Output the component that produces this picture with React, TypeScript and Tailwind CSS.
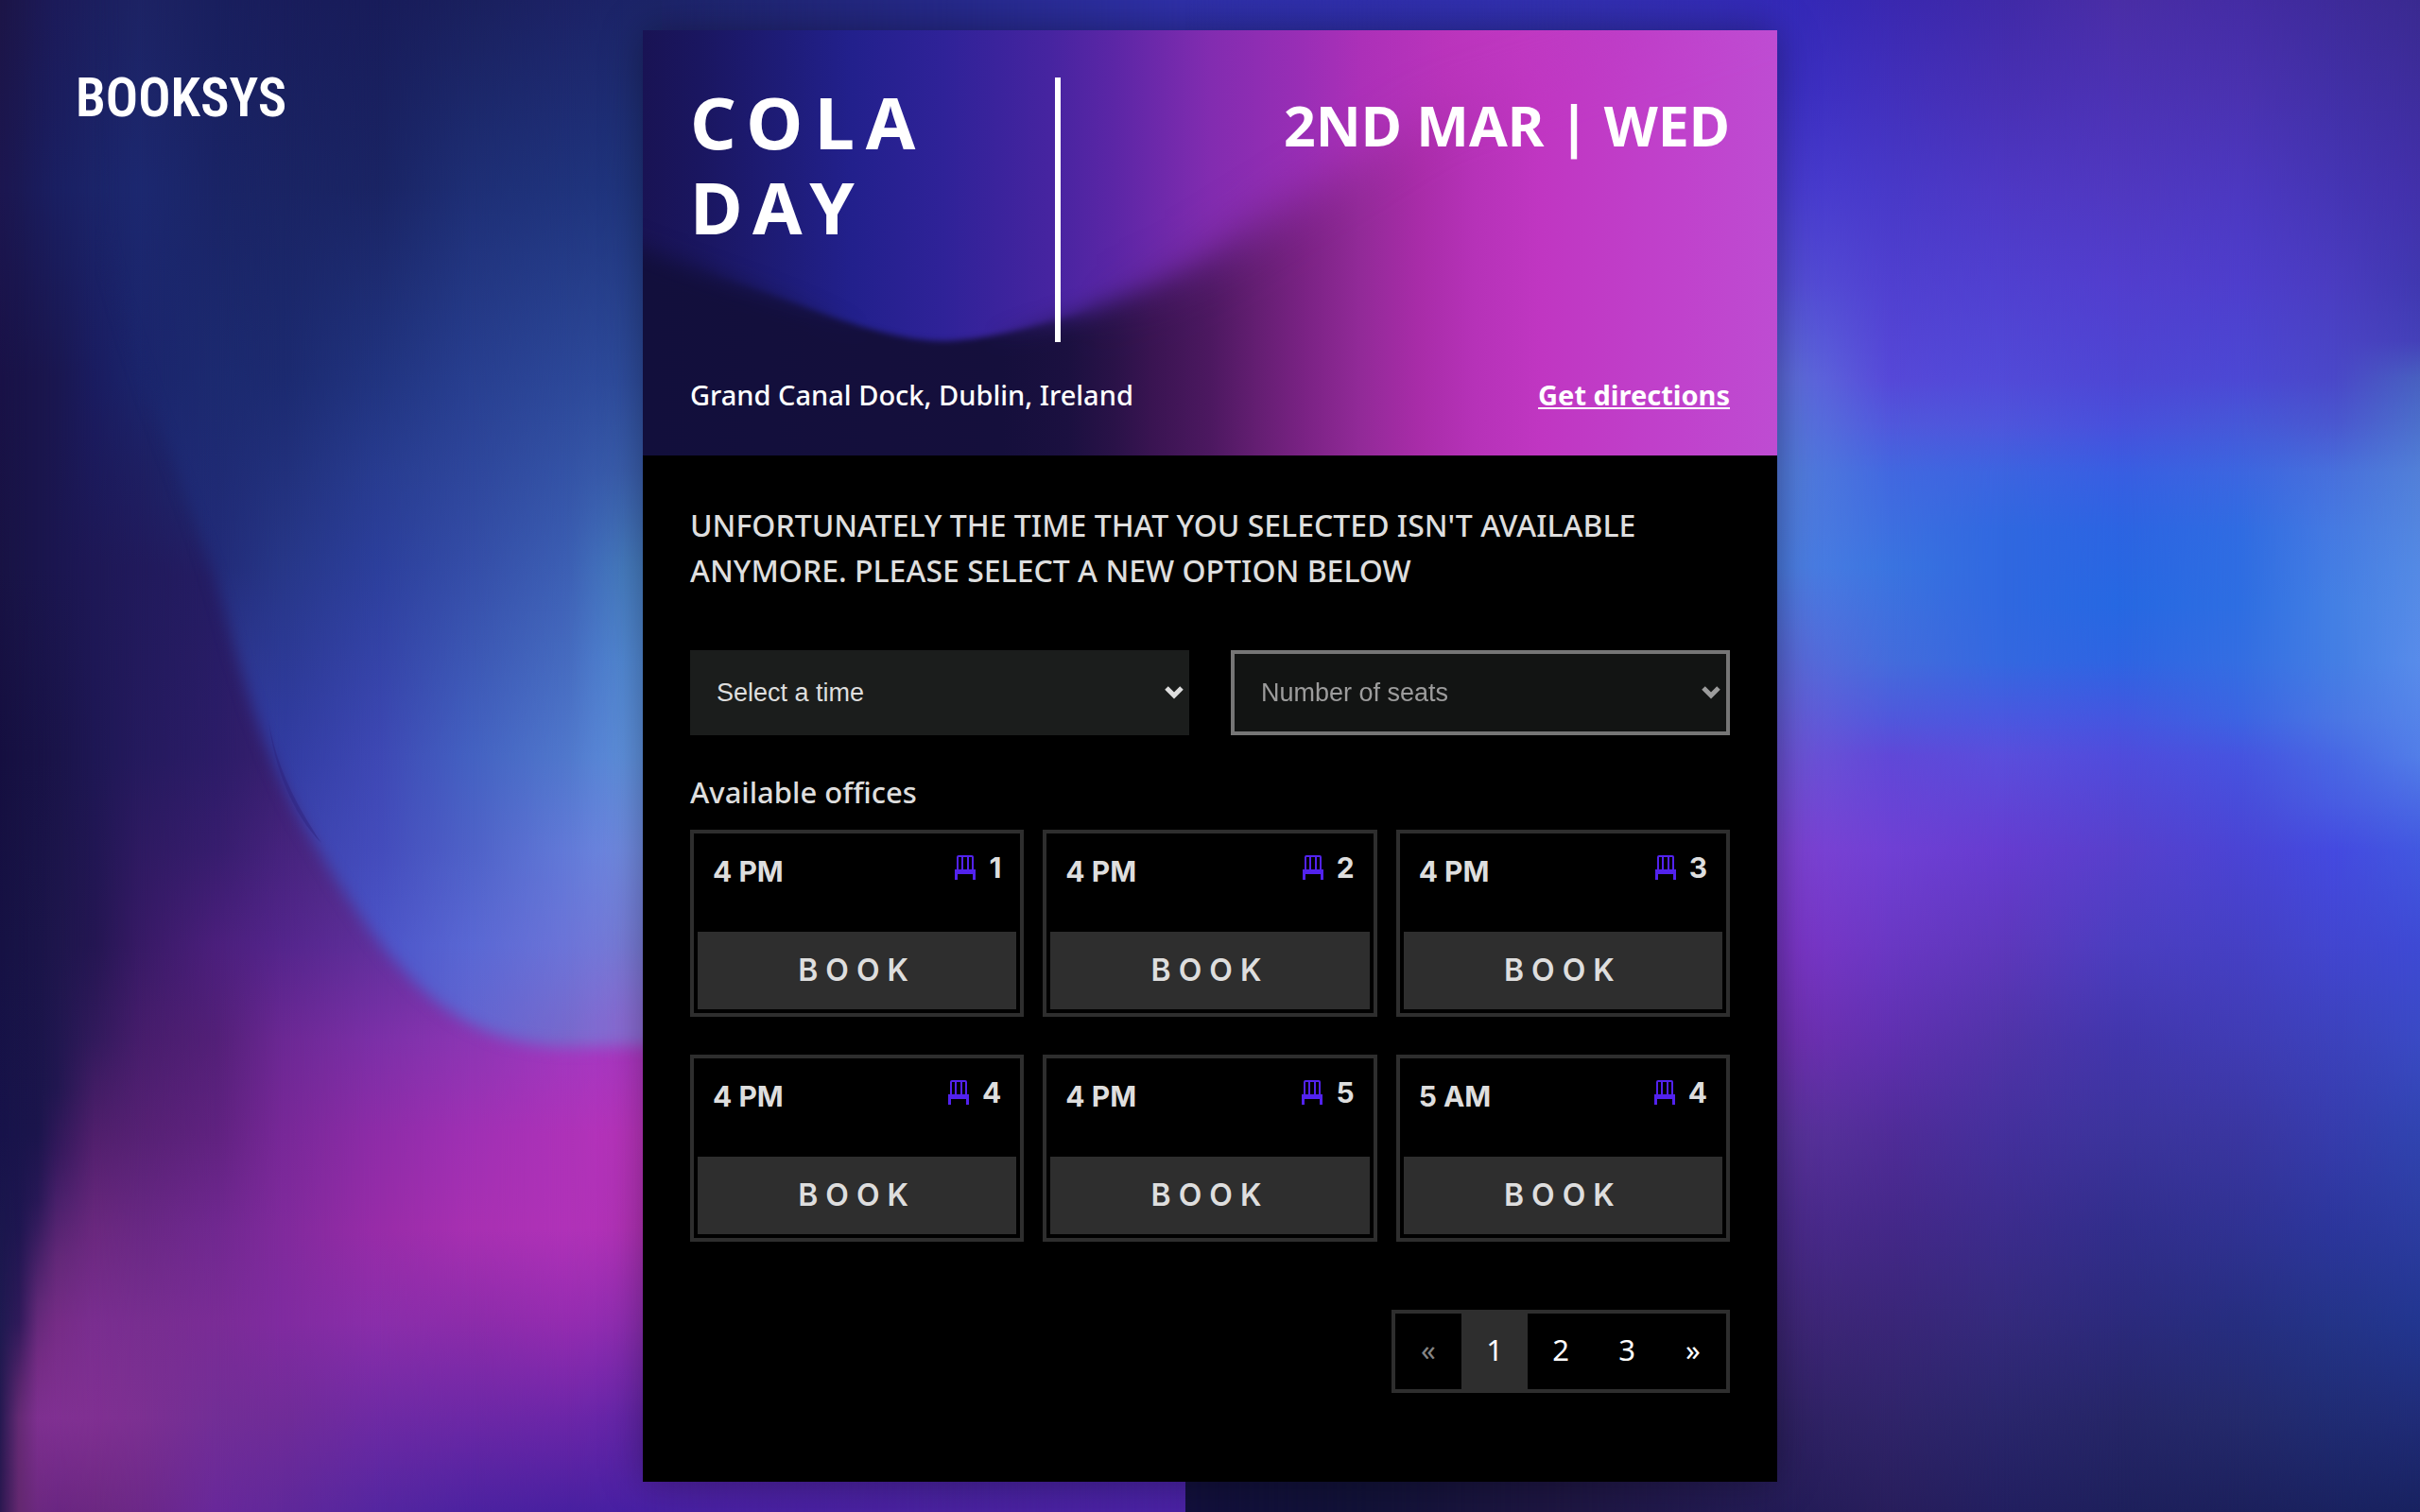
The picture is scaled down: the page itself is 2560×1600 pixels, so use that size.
import { useId } from 'react';

type Stop = [number, string];
type Column = { x: number; stops: Stop[] };

/* Columns of vertical gradients; each one fades into the next from left to right. */
const leftBase: Column[] = [
  { x: 0, stops: [[0, '#1c1547'], [200, '#1c1650'], [400, '#191247'], [600, '#181344'], [800, '#150f40'], [1000, '#161244'], [1200, '#17134a'], [1400, '#1e1a50'], [1600, '#2c1850']] },
  { x: 20, stops: [[0, '#1c174d'], [200, '#1b1954'], [400, '#191349'], [600, '#191448'], [800, '#171143'], [1000, '#181346'], [1200, '#19144b'], [1300, '#1e1650'], [1400, '#301a5a'], [1460, '#52246a'], [1500, '#642a74'], [1600, '#642870']] },
  { x: 40, stops: [[0, '#1c1954'], [200, '#1a1c5c'], [400, '#1a154c'], [600, '#1a154c'], [800, '#181246'], [1000, '#1a1448'], [1200, '#1b154c'], [1270, '#281856'], [1320, '#401f64'], [1380, '#5e2876'], [1440, '#742c84'], [1500, '#7e3090'], [1600, '#6c2880']] },
  { x: 60, stops: [[0, '#1c1b5a'], [200, '#1a1f62'], [400, '#1a1750'], [600, '#1b1650'], [800, '#1a1449'], [1000, '#1e164c'], [1150, '#211750'], [1220, '#34195c'], [1270, '#48206a'], [1330, '#622878'], [1400, '#762c86'], [1500, '#803092'], [1600, '#6a2682']] },
  { x: 100, stops: [[0, '#1c1f5f'], [200, '#1b2469'], [400, '#1a1c60'], [600, '#1e1856'], [800, '#1e1754'], [1000, '#241652'], [1100, '#321a5c'], [1200, '#501f6c'], [1300, '#6a287e'], [1400, '#7a2e90'], [1500, '#803092'], [1600, '#6c2882']] },
  { x: 150, stops: [[0, '#1d2364'], [200, '#1c2870'], [400, '#1b256c'], [500, '#1e1f62'], [600, '#211a5c'], [800, '#251a5e'], [1000, '#381a66'], [1100, '#471d6c'], [1200, '#562174'], [1300, '#692884'], [1400, '#782e90'], [1500, '#7c3092'], [1600, '#6c2888']] },
  { x: 229, stops: [[0, '#191f5e'], [200, '#1a2466'], [400, '#1c2a70'], [520, '#1e286e'], [610, '#251d64'], [800, '#2c1c68'], [900, '#371d6e'], [1000, '#4b1f7c'], [1100, '#532078'], [1200, '#602280'], [1300, '#702890'], [1400, '#7a2c96'], [1500, '#722e96'], [1600, '#68289a']] },
  { x: 300, stops: [[0, '#191d5c'], [200, '#1a2464'], [400, '#1c2a70'], [600, '#25246c'], [700, '#35206e'], [800, '#38206f'], [900, '#46237e'], [1000, '#54258c'], [1100, '#6c2894'], [1200, '#782898'], [1300, '#802a9c'], [1400, '#802ba0'], [1500, '#702c98'], [1600, '#60289a']] },
  { x: 400, stops: [[0, '#181c5a'], [900, '#50308c'], [1000, '#60309c'], [1100, '#7c30a8'], [1200, '#8e2ca8'], [1300, '#982ca8'], [1400, '#8a2eaa'], [1500, '#6e2aa4'], [1600, '#5426a0']] },
  { x: 500, stops: [[0, '#1a205e'], [1000, '#7033a8'], [1100, '#8c36b4'], [1200, '#a030b4'], [1300, '#a830b2'], [1400, '#8c2caa'], [1500, '#6c28a6'], [1600, '#4c22a0']] },
  { x: 600, stops: [[0, '#1c2266'], [1000, '#8a38bc'], [1100, '#a038c0'], [1200, '#ae32b8'], [1300, '#b032b8'], [1400, '#942cb0'], [1500, '#6c26a8'], [1600, '#4820a0']] },
  { x: 680, stops: [[0, '#1c2468'], [1000, '#9038c0'], [1100, '#ac38c4'], [1200, '#ba34bc'], [1300, '#b232b6'], [1400, '#8e2eb2'], [1500, '#6426aa'], [1600, '#4820a4']] },
  { x: 1000, stops: [[0, '#26298a'], [800, '#26298a'], [1600, '#4a22a0']] },
  { x: 1250, stops: [[0, '#2f30a8'], [800, '#2d2ea0'], [1600, '#4a22a4']] },
];

const blob: Column[] = [
  { x: 100, stops: [[0, '#1c1f5f'], [200, '#1b2469'], [400, '#1b1e60'], [600, '#1c2468']] },
  { x: 150, stops: [[0, '#1d2364'], [200, '#1c2870'], [400, '#1b256c'], [600, '#202c78']] },
  { x: 229, stops: [[0, '#191f5e'], [200, '#1a2466'], [400, '#1c2a70'], [600, '#222b78'], [700, '#2c358c'], [800, '#3038a0']] },
  { x: 300, stops: [[0, '#191d5c'], [200, '#1a2464'], [400, '#1c2a70'], [600, '#273788'], [800, '#323ca2'], [900, '#3c42ac']] },
  { x: 400, stops: [[0, '#181c5a'], [200, '#1a2464'], [400, '#213480'], [500, '#283c90'], [600, '#2c3f9c'], [800, '#3e48b4'], [900, '#444cbc'], [1000, '#4c54c8']] },
  { x: 500, stops: [[0, '#1a205e'], [200, '#1e2f76'], [400, '#283f90'], [600, '#354ea8'], [800, '#4462c2'], [900, '#4f62c8'], [1000, '#5a68d4'], [1100, '#6464d0']] },
  { x: 600, stops: [[0, '#1c2266'], [200, '#1f337c'], [400, '#2c4798'], [600, '#3c5fb4'], [800, '#5078cc'], [900, '#627ad8'], [1000, '#6c74d8'], [1100, '#7868cc']] },
  { x: 660, stops: [[0, '#1c2468'], [200, '#20357e'], [400, '#2e4c9c'], [500, '#3a5eac'], [600, '#467cc0'], [700, '#5289d4'], [800, '#5e90dc'], [900, '#708ae0'], [1000, '#787cd8'], [1080, '#8a6cd4']] },
];

const right: Column[] = [
  { x: 1254, stops: [[0, '#2f30a8'], [1500, '#12103c'], [1600, '#12103c']] },
  { x: 1440, stops: [[0, '#302fac'], [1500, '#121238'], [1600, '#121238']] },
  { x: 1650, stops: [[0, '#3230b0'], [1500, '#1e1642'], [1600, '#1e1642']] },
  { x: 1900, stops: [[0, '#3429b8'], [100, '#3c30c4'], [200, '#483cd0'], [300, '#544ed6'], [400, '#5e6cdc'], [500, '#527cdc'], [600, '#4c7ee2'], [700, '#5a6ada'], [800, '#6c54d6'], [900, '#7c42d2'], [1000, '#7a36c6'], [1100, '#6e30b0'], [1200, '#58329a'], [1300, '#4a2a8a'], [1400, '#3e2676'], [1500, '#302264'], [1600, '#241c58']] },
  { x: 2000, stops: [[0, '#3a28b0'], [100, '#4230bc'], [200, '#4839c8'], [300, '#5040d0'], [400, '#5648d8'], [450, '#5058dc'], [500, '#4268e0'], [600, '#3a74e0'], [700, '#446cdc'], [760, '#5058dc'], [800, '#6048d8'], [900, '#7040d4'], [1000, '#6a38c4'], [1100, '#6030b0'], [1200, '#502c98'], [1300, '#442888'], [1400, '#3a2678'], [1500, '#30246a'], [1600, '#281e5c']] },
  { x: 2120, stops: [[0, '#402aa8'], [100, '#4830b4'], [200, '#4e38c4'], [300, '#5040d0'], [400, '#524ad8'], [450, '#4e56dc'], [500, '#3c64e0'], [560, '#3068e0'], [640, '#3068e0'], [700, '#3468e0'], [760, '#4a58e0'], [800, '#5a4edc'], [900, '#663cd0'], [1000, '#5e38bc'], [1100, '#5034a8'], [1200, '#44309c'], [1300, '#3c2c8c'], [1400, '#342a7c'], [1500, '#2a266c'], [1600, '#221f60']] },
  { x: 2240, stops: [[0, '#4a2ea6'], [100, '#4c32b4'], [200, '#5038c0'], [300, '#523ece'], [400, '#4e46d4'], [450, '#4850dc'], [500, '#385ee2'], [560, '#2c64e2'], [640, '#2668e2'], [700, '#2e64e2'], [760, '#4456e0'], [800, '#504cdc'], [900, '#5840cc'], [1000, '#4c3ec0'], [1100, '#4236ac'], [1200, '#3c349c'], [1300, '#322e8c'], [1400, '#2c2a7c'], [1500, '#262668'], [1600, '#1e205c']] },
  { x: 2370, stops: [[0, '#442ca4'], [100, '#4a32b0'], [200, '#4c38c0'], [300, '#4e3ecc'], [400, '#4c48d4'], [450, '#4658d8'], [500, '#3c66e0'], [560, '#306ce2'], [640, '#2e6ee2'], [700, '#346ee2'], [760, '#3c64e2'], [800, '#4654e0'], [900, '#4a44d4'], [1000, '#4540c4'], [1100, '#403cb4'], [1200, '#3a36a0'], [1300, '#303292'], [1400, '#262e80'], [1500, '#242a6c'], [1600, '#1c205c']] },
  { x: 2470, stops: [[0, '#3e2b9a'], [200, '#4535b4'], [300, '#4a3cc0'], [400, '#4a48c8'], [450, '#4a58d0'], [500, '#4870dc'], [560, '#467ae2'], [640, '#4480e4'], [700, '#447ee4'], [760, '#4a76e4'], [800, '#4868e4'], [850, '#485ce2'], [900, '#444ae0'], [1000, '#4246d0'], [1100, '#3c42bc'], [1200, '#363cac'], [1300, '#2c369c'], [1400, '#243488'], [1500, '#202c74'], [1600, '#1a2260']] },
  { x: 2560, stops: [[0, '#3a2a90'], [200, '#4230aa'], [300, '#4038b0'], [360, '#4440b8'], [400, '#4860c0'], [450, '#4c70cc'], [500, '#5280d8'], [600, '#548ae4'], [700, '#588cea'], [800, '#527ee8'], [850, '#4a6ae4'], [900, '#4258e0'], [1000, '#3e4ad4'], [1100, '#3a4ac4'], [1200, '#3044b0'], [1300, '#2c3ca0'], [1400, '#223690'], [1500, '#202c78'], [1600, '#182260']] },
];

function Mesh({ columns, end }: { columns: Column[]; end: number }) {
  const id = useId();
  return (
    <>
      {columns.map((column, i) => {
        const from = i === 0 ? column.x : columns[i - 1].x;
        return (
          <g key={column.x}>
            <linearGradient id={`${id}c${i}`} gradientUnits="userSpaceOnUse" x1="0" y1="0" x2="0" y2="1600">
              {column.stops.map(([y, color]) => (
                <stop key={y} offset={y / 1600} stopColor={color} />
              ))}
            </linearGradient>
            {i > 0 && (
              <>
                <linearGradient id={`${id}f${i}`} gradientUnits="userSpaceOnUse" x1={from} y1="0" x2={column.x} y2="0">
                  <stop offset="0" stopColor="#fff" stopOpacity="0" />
                  <stop offset="1" stopColor="#fff" />
                </linearGradient>
                <mask id={`${id}m${i}`} maskUnits="userSpaceOnUse" x="0" y="0" width="2560" height="1600">
                  <rect x={from} width={end - from} height="1600" fill={`url(#${id}f${i})`} />
                </mask>
              </>
            )}
            <rect
              x={from}
              width={end - from}
              height="1600"
              fill={`url(#${id}c${i})`}
              mask={i > 0 ? `url(#${id}m${i})` : undefined}
            />
          </g>
        );
      })}
    </>
  );
}

function Backdrop() {
  return (
    <svg
      aria-hidden="true"
      viewBox="0 0 2560 1600"
      preserveAspectRatio="none"
      className="absolute inset-0 -z-10 h-full w-full"
    >
      <defs>
        <filter id="blobSoft" x="-10%" y="-10%" width="120%" height="120%">
          <feGaussianBlur stdDeviation="8" />
        </filter>
        <mask id="blobMask" maskUnits="userSpaceOnUse" x="0" y="0" width="1250" height="1600">
          <path
            d="M110 -60V250C145 400 205 530 236 640C262 740 290 825 335 896C365 948 402 1005 445 1046C484 1082 534 1108 604 1108C640 1108 680 1106 900 1098V-60Z"
            fill="#fff"
            filter="url(#blobSoft)"
          />
        </mask>
      </defs>
      <Mesh columns={leftBase} end={1254} />
      <g mask="url(#blobMask)">
        <Mesh columns={blob} end={700} />
      </g>
      <path d="M284 762C292 810 312 850 340 892C310 862 290 812 284 762Z" fill="#2a1f78" opacity="0.4" />
      <Mesh columns={right} end={2560} />
    </svg>
  );
}

const upperStops: Stop[] = [[0, '#191354'], [60, '#1a1660'], [150, '#1e1c78'], [220, '#22208c'], [320, '#2f2298'], [430, '#4624a0'], [500, '#5c26a6'], [600, '#822cb0'], [700, '#9a2eb6'], [760, '#ac30b8'], [850, '#ba34bc'], [930, '#c038c2'], [1050, '#be3ec8'], [1150, '#be4ad0'], [1200, '#be50d0']];
const lowerStops: Stop[] = [[0, '#120f3c'], [380, '#150f3c'], [450, '#1b1040'], [500, '#2a1248'], [540, '#3a1452'], [600, '#4c1860'], [650, '#641e72'], [700, '#7a2284'], [760, '#922a98'], [820, '#a82ca8'], [880, '#b632b8'], [950, '#c036c2'], [1100, '#c042cc'], [1200, '#be4cd2']];

function HeroBackdrop() {
  const wave =
    'M-100 190C0 235 90 262 191 300C240 318 285 329 318 329C360 328 405 316 459 301C520 280 560 262 600 240C680 190 760 140 840 90L1300 -60V600H-100Z';
  return (
    <svg
      aria-hidden="true"
      viewBox="0 0 1200 450"
      preserveAspectRatio="none"
      className="absolute inset-0 -z-10 h-full w-full"
    >
      <defs>
        <linearGradient id="heroUpper" gradientUnits="userSpaceOnUse" x1="0" y1="0" x2="1200" y2="0">
          {upperStops.map(([x, c]) => (
            <stop key={x} offset={x / 1200} stopColor={c} />
          ))}
        </linearGradient>
        <linearGradient id="heroLower" gradientUnits="userSpaceOnUse" x1="0" y1="0" x2="1200" y2="0">
          {lowerStops.map(([x, c]) => (
            <stop key={x} offset={x / 1200} stopColor={c} />
          ))}
        </linearGradient>
        <filter id="crisp" filterUnits="userSpaceOnUse" x="-100" y="-100" width="1400" height="700">
          <feGaussianBlur stdDeviation="3" />
        </filter>
        <filter id="hazy" filterUnits="userSpaceOnUse" x="-100" y="-100" width="1400" height="700">
          <feGaussianBlur stdDeviation="26" />
        </filter>
        <filter id="soft" filterUnits="userSpaceOnUse" x="-100" y="-100" width="1400" height="700">
          <feGaussianBlur stdDeviation="12" />
        </filter>
        <linearGradient id="fadeCrisp" gradientUnits="userSpaceOnUse" x1="0" y1="0" x2="1200" y2="0">
          <stop offset="0.04" stopColor="#000" />
          <stop offset="0.2" stopColor="#fff" />
          <stop offset="0.3" stopColor="#fff" />
          <stop offset="0.4" stopColor="#000" />
        </linearGradient>
        <linearGradient id="fadeHazy" gradientUnits="userSpaceOnUse" x1="0" y1="0" x2="1200" y2="0">
          <stop offset="0.38" stopColor="#000" />
          <stop offset="0.54" stopColor="#fff" />
        </linearGradient>
        <mask id="crispArea" maskUnits="userSpaceOnUse" x="0" y="0" width="1200" height="450">
          <rect width="1200" height="450" fill="url(#fadeCrisp)" />
        </mask>
        <mask id="hazyArea" maskUnits="userSpaceOnUse" x="0" y="0" width="1200" height="450">
          <rect width="1200" height="450" fill="url(#fadeHazy)" />
        </mask>
        <mask id="waveMask" maskUnits="userSpaceOnUse" x="0" y="0" width="1200" height="450">
          <path d={wave} fill="#fff" filter="url(#soft)" />
          <g mask="url(#hazyArea)">
            <rect width="1200" height="450" fill="#000" />
            <path d={wave} fill="#fff" filter="url(#hazy)" />
          </g>
          <g mask="url(#crispArea)">
            <rect width="1200" height="450" fill="#000" />
            <path d={wave} fill="#fff" filter="url(#crisp)" />
          </g>
        </mask>
      </defs>
      <rect width="1200" height="450" fill="url(#heroUpper)" />
      <rect width="1200" height="450" fill="url(#heroLower)" mask="url(#waveMask)" />
    </svg>
  );
}

function ChairIcon() {
  return (
    <svg aria-hidden="true" viewBox="0 0 22 26" className="h-[26px] w-[22px] text-[#5222ee]" fill="currentColor">
      <path
        fillRule="evenodd"
        d="M4 0H18Q20 0 20 2V15H22V26H19V20H3V26H0V15H2V2Q2 0 4 0ZM4 2V15H7V2ZM9 2V15H13V2ZM15 2V15H18V2Z"
      />
    </svg>
  );
}

type SelectBoxProps = { label: string; options: string[]; className: string; disabled?: boolean };

function SelectBox({ label, options, className, disabled }: SelectBoxProps) {
  return (
    <div className={disabled ? 'relative opacity-70' : 'relative'}>
      <select
        aria-label={label}
        disabled={disabled}
        defaultValue=""
        className={`h-[90px] w-full appearance-none rounded-none bg-[#1b1d1c] pr-12 pl-7 font-['Liberation_Sans',Arial,sans-serif] text-[27px] text-[#dedede] opacity-100 outline-none ${className}`}
      >
        <option value="">{label}</option>
        {options.map((option) => (
          <option key={option}>{option}</option>
        ))}
      </select>
      <svg
        aria-hidden="true"
        viewBox="0 0 20 14"
        className={`pointer-events-none absolute top-1/2 h-[14px] w-5 -translate-y-1/2 text-[#dedede] ${disabled ? 'right-[10px]' : 'right-[6px]'}`}
        fill="none"
        stroke="currentColor"
        strokeWidth="5"
      >
        <path d="M2 2L10 10L18 2" />
      </svg>
    </div>
  );
}

const offices = [
  { time: '4 PM', seats: 1 },
  { time: '4 PM', seats: 2 },
  { time: '4 PM', seats: 3 },
  { time: '4 PM', seats: 4 },
  { time: '4 PM', seats: 5 },
  { time: '5 AM', seats: 4 },
];

function OfficeCard({ time, seats }: { time: string; seats: number }) {
  return (
    <li className="flex h-[198px] flex-col justify-between border-4 border-[#2e2e2e] p-1 font-['Inter',sans-serif]">
      <div className="flex items-start justify-between px-4 text-[30px] leading-9 font-bold">
        <span className="pt-[18px]">{time}</span>
        <span className="flex items-center gap-[14px] pt-[14px]">
          <ChairIcon />
          <span aria-label={`${seats} seats`}>{seats}</span>
        </span>
      </div>
      <button type="button" className="h-[82px] bg-[#2e2e2e] text-[32px] font-semibold tracking-[8px]">
        BOOK
      </button>
    </li>
  );
}

function Pagination() {
  const cell = 'flex h-20 w-[70px] items-center justify-center pb-1';
  return (
    <nav aria-label="Pages" className="flex self-end border-4 border-[#2e2e2e] text-[31px] text-white">
      <button type="button" aria-label="Previous" disabled className={`${cell} text-[#858585]`}>«</button>
      <button type="button" aria-current="page" className={`${cell} bg-[#2e2e2e]`}>1</button>
      <button type="button" className={cell}>2</button>
      <button type="button" className={cell}>3</button>
      <button type="button" aria-label="Next" className={cell}>»</button>
    </nav>
  );
}

export default function App() {
  return (
    <div className="relative isolate grid min-h-screen grid-cols-[1fr_minmax(0,1200px)_1fr] py-8 font-['Noto_Sans',sans-serif] text-[#dedede]">
      <Backdrop />
      <header className="px-20 pt-9">
        <a href="#" className="font-['Roboto_Condensed','Roboto',sans-serif] text-[57px] leading-[72px] font-semibold text-white">
          BOOKSYS
        </a>
      </header>
      <main className="flex flex-col bg-black shadow-[0_0_40px_rgba(0,0,0,0.35)]">
        <section className="relative isolate flex min-h-[450px] flex-col justify-between px-[50px] pt-[50px] pb-10 text-white">
          <HeroBackdrop />
          <div className="flex items-start justify-between">
            <div className="flex h-[280px] w-[392px] border-r-[6px] border-white">
              <h1 className="w-min pt-[2px] text-[76px] leading-[90px] font-bold tracking-[12px]">COLA DAY</h1>
            </div>
            <p className="pt-[18px] text-[59px] leading-[64px] font-bold">2ND MAR | WED</p>
          </div>
          <div className="flex items-center justify-between text-[29px] leading-[48px]">
            <address className="font-medium not-italic">Grand Canal Dock, Dublin, Ireland</address>
            <a href="#" className="font-bold underline">Get directions</a>
          </div>
        </section>
        <section className="flex flex-1 flex-col px-[50px] pt-[50px] pb-[92px]">
          <h2 className="text-[32px] leading-[48px] font-medium">
            UNFORTUNATELY THE TIME THAT YOU SELECTED ISN'T AVAILABLE ANYMORE. PLEASE SELECT A NEW OPTION BELOW
          </h2>
          <div className="mt-[60px] grid grid-cols-2 gap-11">
            <SelectBox label="Select a time" options={['4 PM', '5 AM']} className="" />
            <SelectBox
              label="Number of seats"
              options={['1', '2', '3', '4', '5']}
              className="border-4 border-[#a9a9a9]"
              disabled
            />
          </div>
          <h3 className="mt-9 text-[31px] leading-[48px] font-medium">Available offices</h3>
          <ul className="mt-4 mb-[72px] grid grid-cols-3 gap-x-5 gap-y-10">
            {offices.map((office, i) => (
              <OfficeCard key={i} {...office} />
            ))}
          </ul>
          <Pagination />
        </section>
      </main>
    </div>
  );
}
